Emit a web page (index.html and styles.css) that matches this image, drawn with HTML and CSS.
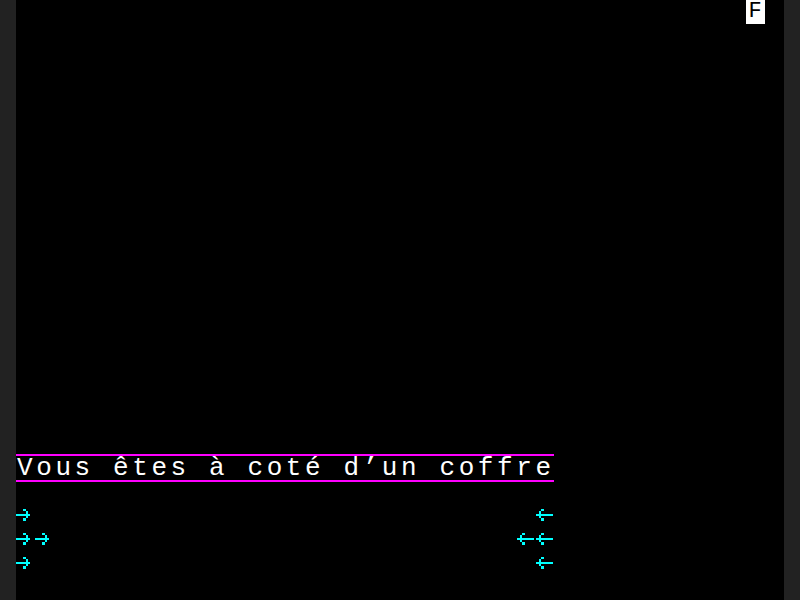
FILE: index.html
```html
<!DOCTYPE html>
<html lang="fr">
<head>
<meta charset="utf-8">
<title>Minitel</title>
<link rel="stylesheet" href="styles.css">
</head>
<body>
<div class="frame">
  <div class="screen">
    <div class="row row-status"><span class="status">F</span></div>
    <div class="spacer"></div>
    <div class="row row-rule-bottom"></div>
    <div class="row row-text"><span class="msg">Vous êtes à coté d’un coffre</span></div>
    <div class="row row-rule-top"></div>
    <div class="row row-arrows">
      <div class="arrows left-group">
        <svg class="arrow" viewBox="0 0 8 10" aria-hidden="true"><path d="M3 2h1v1H3zM4 3h1v1H4zM0 4h6v1H0zM4 5h1v1H4zM3 6h1v1H3z"/></svg>
      </div>
      <div class="arrows right-group">
        <svg class="arrow" viewBox="0 0 8 10" aria-hidden="true"><path d="M3 2h1v1H3zM2 3h1v1H2zM1 4h7v1H1zM2 5h1v1H2zM3 6h1v1H3z"/></svg>
      </div>
    </div>
    <div class="row row-arrows">
      <div class="arrows left-group">
        <svg class="arrow" viewBox="0 0 8 10" aria-hidden="true"><path d="M3 2h1v1H3zM4 3h1v1H4zM0 4h6v1H0zM4 5h1v1H4zM3 6h1v1H3z"/></svg>
        <svg class="arrow" viewBox="0 0 8 10" aria-hidden="true"><path d="M3 2h1v1H3zM4 3h1v1H4zM0 4h6v1H0zM4 5h1v1H4zM3 6h1v1H3z"/></svg>
      </div>
      <div class="arrows right-group">
        <svg class="arrow" viewBox="0 0 8 10" aria-hidden="true"><path d="M3 2h1v1H3zM2 3h1v1H2zM1 4h7v1H1zM2 5h1v1H2zM3 6h1v1H3z"/></svg>
        <svg class="arrow" viewBox="0 0 8 10" aria-hidden="true"><path d="M3 2h1v1H3zM2 3h1v1H2zM1 4h7v1H1zM2 5h1v1H2zM3 6h1v1H3z"/></svg>
      </div>
    </div>
    <div class="row row-arrows">
      <div class="arrows left-group">
        <svg class="arrow" viewBox="0 0 8 10" aria-hidden="true"><path d="M3 2h1v1H3zM4 3h1v1H4zM0 4h6v1H0zM4 5h1v1H4zM3 6h1v1H3z"/></svg>
      </div>
      <div class="arrows right-group">
        <svg class="arrow" viewBox="0 0 8 10" aria-hidden="true"><path d="M3 2h1v1H3zM2 3h1v1H2zM1 4h7v1H1zM2 5h1v1H2zM3 6h1v1H3z"/></svg>
      </div>
    </div>
    <div class="row"></div>
  </div>
</div>
</body>
</html>
```

FILE: styles.css
```css
html, body {
  margin: 0;
  padding: 0;
  background: #222222;
  width: 800px;
  height: 600px;
  overflow: hidden;
}

.frame {
  display: flex;
  justify-content: center;
  width: 800px;
  height: 600px;
}

.screen {
  width: 768px;
  height: 600px;
  background: #000000;
  display: flex;
  flex-direction: column;
  font-family: "Liberation Mono", "DejaVu Sans Mono", monospace;
  color: #ffffff;
}

.row {
  height: 24px;
  flex: 0 0 24px;
  box-sizing: border-box;
  display: flex;
  align-items: stretch;
}

.spacer {
  flex: 0 0 408px;
}

.row-status {
  padding-left: 729.6px;
}

.status {
  width: 19.2px;
  height: 24px;
  background: #ffffff;
  color: #000000;
  font-size: 22px;
  line-height: 24px;
  text-align: center;
}

.row-rule-bottom {
  width: 537.6px;
  border-bottom: 2px solid #ff00ff;
}

.row-rule-top {
  width: 537.6px;
  border-top: 2px solid #ff00ff;
}

.row-text {
  width: 537.6px;
  align-items: center;
}

.msg {
  font-size: 26px;
  line-height: 24px;
  letter-spacing: 3.6px;
  white-space: pre;
  padding-left: 1px;
}

.row-arrows {
  width: 537.6px;
  justify-content: space-between;
}

.arrows {
  display: flex;
}

.arrow {
  width: 19.2px;
  height: 24px;
  display: block;
  fill: #00ffff;
  shape-rendering: crispEdges;
}
```
